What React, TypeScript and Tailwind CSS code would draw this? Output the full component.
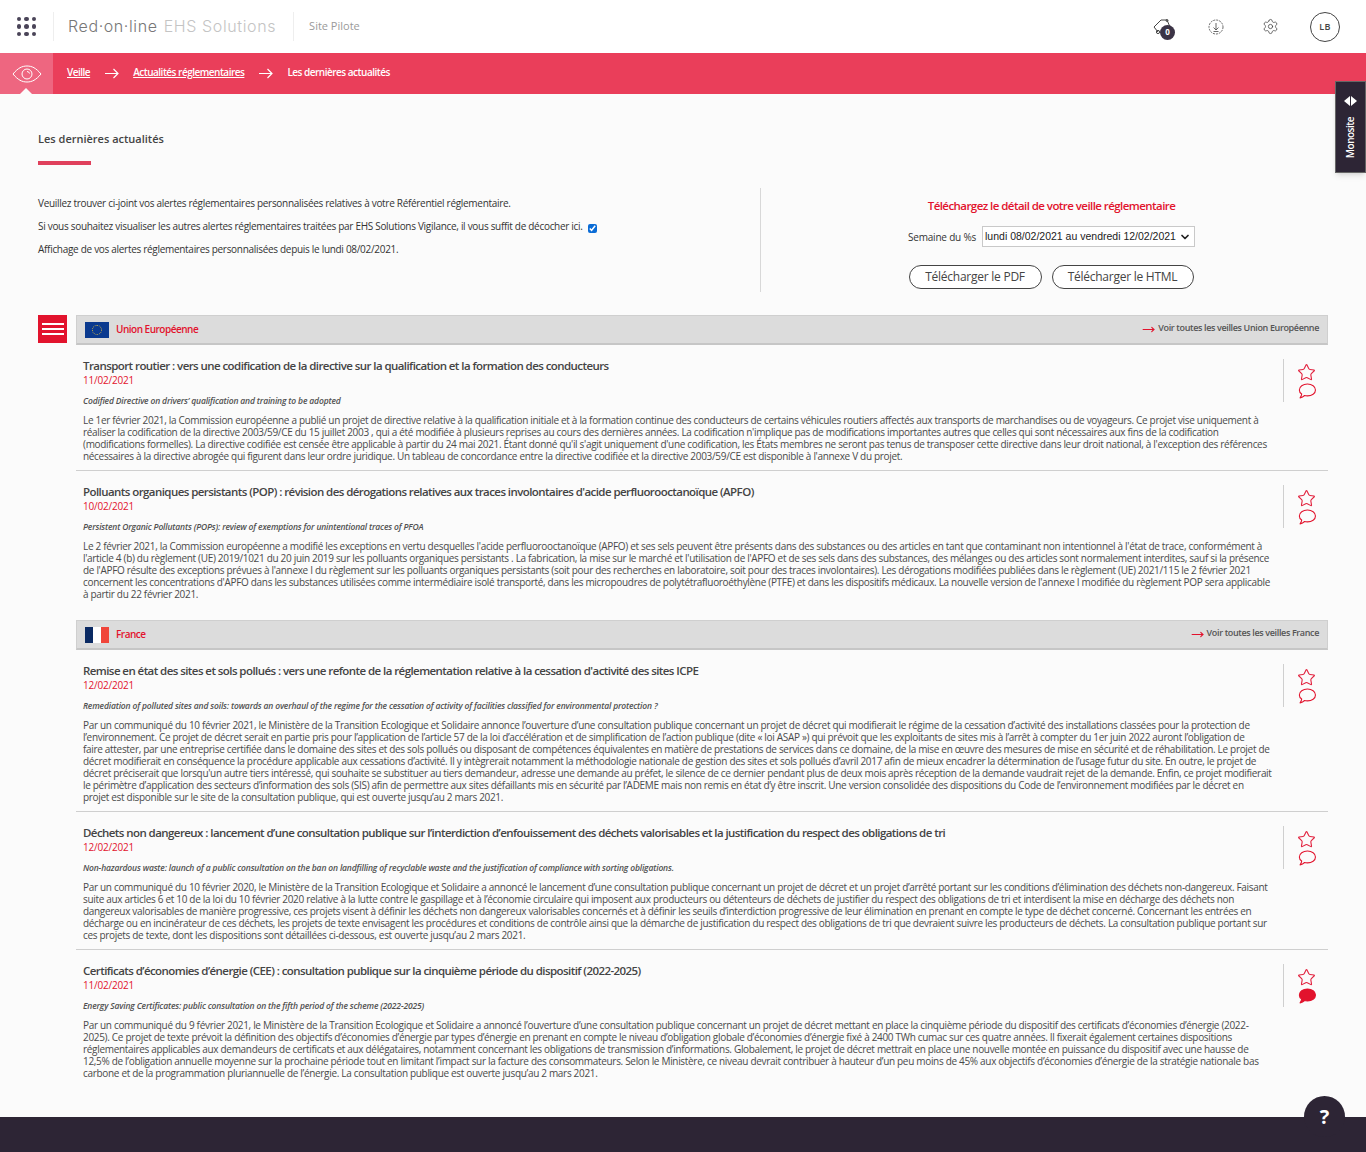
import React from "react";
import { MoveRight, Settings, Star, ChevronDown } from "lucide-react";

const font = "font-['Open_Sans','Noto_Sans',sans-serif]";

type Article = { title: string; date: string; en: string; lines: string[]; filled?: boolean };

const eu: Article[] = [
  {
    title: "Transport routier : vers une codification de la directive sur la qualification et la formation des conducteurs",
    date: "11/02/2021",
    en: "Codified Directive on drivers’ qualification and training to be adopted",
    lines: [
      "Le 1er février 2021, la Commission européenne a publié un projet de directive relative à la qualification initiale et à la formation continue des conducteurs de certains véhicules routiers affectés aux transports de marchandises ou de voyageurs. Ce projet vise uniquement à",
      "réaliser la codification de la directive 2003/59/CE du 15 juillet 2003 , qui a été modifiée à plusieurs reprises au cours des dernières années. La codification n'implique pas de modifications importantes autres que celles qui sont nécessaires aux fins de la codification",
      "(modifications formelles). La directive codifiée est censée être applicable à partir du 24 mai 2021. Étant donné qu'il s'agit uniquement d'une codification, les États membres ne seront pas tenus de transposer cette directive dans leur droit national, à l'exception des références",
      "nécessaires à la directive abrogée qui figurent dans leur ordre juridique. Un tableau de concordance entre la directive codifiée et la directive 2003/59/CE est disponible à l'annexe V du projet.",
    ],
  },
  {
    title: "Polluants organiques persistants (POP) : révision des dérogations relatives aux traces involontaires d'acide perfluorooctanoïque (APFO)",
    date: "10/02/2021",
    en: "Persistent Organic Pollutants (POPs): review of exemptions for unintentional traces of PFOA",
    lines: [
      "Le 2 février 2021, la Commission européenne a modifié les exceptions en vertu desquelles l'acide perfluorooctanoïque (APFO) et ses sels peuvent être présents dans des substances ou des articles en tant que contaminant non intentionnel à l'état de trace, conformément à",
      "l'article 4 (b) du règlement (UE) 2019/1021 du 20 juin 2019 sur les polluants organiques persistants . La fabrication, la mise sur le marché et l'utilisation de l'APFO et de ses sels dans des substances, des mélanges ou des articles sont normalement interdites, sauf si la présence",
      "de l'APFO résulte des exceptions prévues à l'annexe I du règlement sur les polluants organiques persistants (soit pour des recherches en laboratoire, soit pour des traces involontaires). Les dérogations modifiées publiées dans le règlement (UE) 2021/115 le 2 février 2021",
      "concernent les concentrations d'APFO dans les substances utilisées comme intermédiaire isolé transporté, dans les micropoudres de polytétrafluoroéthylène (PTFE) et dans les dispositifs médicaux. La nouvelle version de l'annexe I modifiée du règlement POP sera applicable",
      "à partir du 22 février 2021.",
    ],
  },
];

const fr: Article[] = [
  {
    title: "Remise en état des sites et sols pollués : vers une refonte de la réglementation relative à la cessation d'activité des sites ICPE",
    date: "12/02/2021",
    en: "Remediation of polluted sites and soils: towards an overhaul of the regime for the cessation of activity of facilities classified for environmental protection ?",
    lines: [
      "Par un communiqué du 10 février 2021, le Ministère de la Transition Ecologique et Solidaire annonce l’ouverture d’une consultation publique concernant un projet de décret qui modifierait le régime de la cessation d’activité des installations classées pour la protection de",
      "l’environnement. Ce projet de décret serait en partie pris pour l’application de l’article 57 de la loi d’accélération et de simplification de l’action publique (dite « loi ASAP ») qui prévoit que les exploitants de sites mis à l’arrêt à compter du 1er juin 2022 auront l’obligation de",
      "faire attester, par une entreprise certifiée dans le domaine des sites et des sols pollués ou disposant de compétences équivalentes en matière de prestations de services dans ce domaine, de la mise en œuvre des mesures de mise en sécurité et de réhabilitation. Le projet de",
      "décret modifierait en conséquence la procédure applicable aux cessations d’activité. Il y intègrerait notamment la méthodologie nationale de gestion des sites et sols pollués d’avril 2017 afin de mieux encadrer la détermination de l’usage futur du site. En outre, le projet de",
      "décret préciserait que lorsqu'un autre tiers intéressé, qui souhaite se substituer au tiers demandeur, adresse une demande au préfet, le silence de ce dernier pendant plus de deux mois après réception de la demande vaudrait rejet de la demande. Enfin, ce projet modifierait",
      "le périmètre d’application des secteurs d’information des sols (SIS) afin de permettre aux sites défaillants mis en sécurité par l’ADEME mais non remis en état d’y être inscrit. Une version consolidée des dispositions du Code de l’environnement modifiées par le décret en",
      "projet est disponible sur le site de la consultation publique, qui est ouverte jusqu’au 2 mars 2021.",
    ],
  },
  {
    title: "Déchets non dangereux : lancement d’une consultation publique sur l’interdiction d’enfouissement des déchets valorisables et la justification du respect des obligations de tri",
    date: "12/02/2021",
    en: "Non-hazardous waste: launch of a public consultation on the ban on landfilling of recyclable waste and the justification of compliance with sorting obligations.",
    lines: [
      "Par un communiqué du 10 février 2020, le Ministère de la Transition Ecologique et Solidaire a annoncé le lancement d’une consultation publique concernant un projet de décret et un projet d’arrêté portant sur les conditions d’élimination des déchets non-dangereux. Faisant",
      "suite aux articles 6 et 10 de la loi du 10 février 2020 relative à la lutte contre le gaspillage et à l’économie circulaire qui imposent aux producteurs ou détenteurs de déchets de justifier du respect des obligations de tri et interdisent la mise en décharge des déchets non",
      "dangereux valorisables de manière progressive, ces projets visent à définir les déchets non dangereux valorisables concernés et à définir les seuils d’interdiction progressive de leur élimination en prenant en compte le type de déchet concerné. Concernant les entrées en",
      "décharge ou en incinérateur de ces déchets, les projets de texte envisagent les procédures et conditions de contrôle ainsi que la démarche de justification du respect des obligations de tri que devraient suivre les producteurs de déchets. La consultation publique portant sur",
      "ces projets de texte, dont les dispositions sont détaillées ci-dessous, est ouverte jusqu’au 2 mars 2021.",
    ],
  },
  {
    title: "Certificats d’économies d’énergie (CEE) : consultation publique sur la cinquième période du dispositif (2022-2025)",
    date: "11/02/2021",
    en: "Energy Saving Certificates: public consultation on the fifth period of the scheme (2022-2025)",
    filled: true,
    lines: [
      "Par un communiqué du 9 février 2021, le Ministère de la Transition Ecologique et Solidaire a annoncé l’ouverture d’une consultation publique concernant un projet de décret mettant en place la cinquième période du dispositif des certificats d’économies d’énergie (2022-",
      "2025). Ce projet de texte prévoit la définition des objectifs d’économies d’énergie par types d’énergie en prenant en compte le niveau d’obligation globale d’économies d’énergie fixé à 2400 TWh cumac sur ces quatre années. Il fixerait également certaines dispositions",
      "réglementaires applicables aux demandeurs de certificats et aux délégataires, notamment concernant les obligations de transmission d’informations. Globalement, le projet de décret mettrait en place une nouvelle montée en puissance du dispositif avec une hausse de",
      "12,5% de l’obligation annuelle moyenne sur la prochaine période tout en limitant l’impact sur la facture des consommateurs. Selon le Ministère, ce niveau devrait contribuer à hauteur d’un peu moins de 45% aux objectifs d’économies d’énergie de la stratégie nationale bas",
      "carbone et de la programmation pluriannuelle de l’énergie. La consultation publique est ouverte jusqu’au 2 mars 2021.",
    ],
  },
];

function Bubble({ filled }: { filled?: boolean }) {
  return (
    <svg viewBox="0 0 20 16" preserveAspectRatio="none" className="w-[18px] h-[16px]" fill={filled ? "#e2132d" : "none"} stroke="#e2132d" strokeWidth="1.2" strokeLinejoin="round">
      <path d="M10.5 1C5.5 1 1.5 3.4 1.5 6.9c0 1.7 1 3.2 2.6 4.2-.2 1.3-.8 2.6-1.8 3.7 1.9-.3 3.7-1.1 5-2.3 1 .3 2 .4 3.2.4 5 0 8.9-2.5 8.9-6S15.5 1 10.5 1Z" />
    </svg>
  );
}

function CrumbArrow() {
  return (
    <svg viewBox="0 0 14 11" className="w-[14px] h-[11px] ml-[15px] mr-[14px] mt-[1px]" fill="none" stroke="white" strokeWidth="1.2">
      <path d="M0 5.5h13M8.5 1l4.5 4.5L8.5 10" />
    </svg>
  );
}

function ArticleRow({ a, last }: { a: Article; last?: boolean }) {
  return (
    <div className={`flex pl-[7px] pt-[14px] pb-[8px] ${last ? "" : "border-b border-[#cfcfcf]"}`}>
      <div className="w-[1200px] min-w-0">
        <div className="h-[14px] whitespace-nowrap text-[11.5px] leading-[14px] font-semibold text-[#444444] tracking-[-0.57px]">{a.title}</div>
        <div className="h-[14px] text-[10px] leading-[14px] text-[#e2132d] tracking-[-0.2px]">{a.date}</div>
        <div className="mt-[1px] h-[26px] whitespace-nowrap text-[8.5px] leading-[26px] italic font-semibold text-[#505050] tracking-[-0.16px]">{a.en}</div>
        <div className="text-[10px] leading-[12px] text-[#4a4a4a] tracking-[-0.315px]">
          {a.lines.map((l, i) => (
            <div key={i} className="whitespace-nowrap">{l}</div>
          ))}
        </div>
      </div>
      <div className="w-[1px] h-[43px] bg-[#cfcfcf] shrink-0" />
      <div className="ml-[13px] pt-[4px] flex flex-col items-center -space-y-[1px]">
        <Star size={19} strokeWidth={1.4} className="text-[#e2233f]" />
        <div className="pt-[2px]">
          <Bubble filled={a.filled} />
        </div>
      </div>
    </div>
  );
}

function SectionBar({ flag, name, link }: { flag: React.ReactNode; name: string; link: string }) {
  return (
    <div className="h-[30px] flex items-center bg-[#dcdcdc] border border-[#cfcfcf] border-b-2 border-b-[#c6c6c6] pl-[8px] pr-[8px]">
      {flag}
      <span className="ml-[7px] text-[10px] font-semibold text-[#e2132d] tracking-[-0.5px]">{name}</span>
      <span className="ml-auto -mt-[4px] flex items-center gap-[3px] text-[9px] font-semibold text-[#555555] tracking-[-0.36px]">
        <MoveRight size={13} strokeWidth={2} className="text-[#e2132d] mt-[4px]" />
        {link}
      </span>
    </div>
  );
}

export default function App() {
  return (
    <div className={`${font} w-[1366px] h-[1152px] relative overflow-hidden bg-[#fbfbfb] text-[#444444]`}>
      <header className="h-[53px] bg-white flex items-center">
        <div className="w-[53px] flex justify-center">
          <div className="grid grid-cols-3 gap-[3px]">
            {Array.from({ length: 9 }).map((_, i) => (
              <span key={i} className="w-[4.5px] h-[4.5px] rounded-full bg-[#4a4458]" />
            ))}
          </div>
        </div>
        <div className="h-[29px] w-px bg-[#eeeeee]" />
        <div className="ml-[14px] -mt-[1px] whitespace-nowrap font-['Inter',sans-serif] text-[16px] font-light tracking-[0.6px] text-[#777777]">
          Red·on·line <span className="ml-[1px] text-[#c4c4c4] tracking-[0.62px]">EHS Solutions</span>
        </div>
        <div className="ml-[17px] h-[29px] w-px bg-[#eeeeee]" />
        <div className="ml-[15px] text-[11px] text-[#9a9a9a]">Site Pilote</div>
        <div className="ml-auto flex items-center pr-[26px]">
          <div className="relative w-[24px] h-[24px] mr-[32px]">
            <svg viewBox="0 0 22 22" className="w-[22px] h-[22px] mt-[3px]" fill="none" stroke="#444" strokeWidth="1">
              <path d="M2 9 L9 2 L15 2 L18 9" />
              <path d="M2 9 L6 14" />
              <circle cx="6" cy="14" r="1.6" />
              <circle cx="15" cy="2.5" r="1" />
            </svg>
            <span className="absolute left-[8px] top-[10px] w-[15px] h-[15px] rounded-full bg-[#3b3446] text-white text-[8px] font-bold flex items-center justify-center">0</span>
          </div>
          <svg viewBox="0 0 16 16" className="w-[16px] h-[16px] mr-[38px]" fill="none" stroke="#444" strokeWidth="0.8">
            <circle cx="8" cy="8" r="7" strokeDasharray="2 1" />
            <path d="M8 4v7M5.5 8.5 8 11l2.5-2.5M5.5 12.5h5" />
          </svg>
          <Settings size={17} strokeWidth={1.1} className="text-[#444444] mr-[31px]" />
          <div className="w-[30px] h-[30px] rounded-full border border-[#444444] bg-white flex items-center justify-center text-[9px] font-semibold tracking-[0.4px] text-[#444444]">LB</div>
        </div>
      </header>

      <nav className="h-[41px] bg-[#ea3e5a] flex items-center text-white relative">
        <div className="w-[53px] h-full bg-[#ee6680] flex items-center justify-center relative">
          <svg viewBox="0 0 30 18" className="w-[30px] h-[18px]" fill="none" stroke="white" strokeWidth="1">
            <path d="M1 9C6 3 10 1 15 1s9 2 14 8c-5 6-9 8-14 8S6 15 1 9Z" />
            <circle cx="15" cy="9" r="5" />
            <path d="M15 6.5a2.5 2.5 0 0 1 2.5 2" />
          </svg>
          <span className="absolute bottom-0 left-[20px] w-0 h-0 border-l-[6px] border-r-[6px] border-b-[6px] border-l-transparent border-r-transparent border-b-[#fbfbfb]" />
        </div>
        <div className="ml-[14px] -mt-[2px] flex items-center text-[10px] font-semibold tracking-[-0.5px] whitespace-nowrap">
          <span className="underline">Veille</span>
          <CrumbArrow />
          <span className="underline">Actualités réglementaires</span>
          <CrumbArrow />
          <span>Les dernières actualités</span>
        </div>
      </nav>

      <aside className="absolute right-0 top-[81px] w-[31px] h-[92px] bg-[#2d2535] border border-[#666666] shadow-md flex flex-col items-center text-white">
        <div className="mt-[14px] flex gap-[1px]">
          <span className="w-0 h-0 border-y-[5px] border-y-transparent border-r-[6px] border-r-white" />
          <span className="w-0 h-0 border-y-[5px] border-y-transparent border-l-[6px] border-l-white" />
        </div>
        <span className="mt-[11px] [writing-mode:vertical-rl] rotate-180 text-[10px] font-semibold tracking-[-0.5px]">Monosite</span>
      </aside>

      <main className="px-[38px]">
        <h1 className="pt-[37px] h-[67px] text-[11px] leading-[16px] font-semibold text-[#444444]">Les dernières actualités</h1>
        <div className="w-[53px] h-[4px] bg-[#e0405c]" />

        <section className="mt-[23px] flex h-[104px]">
          <div className="w-[723px] border-r border-[#d8d8d8] text-[10px] tracking-[-0.3px] text-[#333333] pt-[9px] space-y-[11px]">
            <p className="leading-[12px]">Veuillez trouver ci-joint vos alertes réglementaires personnalisées relatives à votre Référentiel réglementaire.</p>
            <p className="leading-[12px] h-[12px] flex items-center">
              Si vous souhaitez visualiser les autres alertes réglementaires traitées par EHS Solutions Vigilance, il vous suffit de décocher ici.
              <input type="checkbox" defaultChecked className="ml-[5px] translate-y-[2px] w-[9px] h-[9px] accent-[#0b6cd6]" />
            </p>
            <p className="leading-[12px]">Affichage de vos alertes réglementaires personnalisées depuis le lundi 08/02/2021.</p>
          </div>
          <div className="flex-1 flex flex-col items-center pl-[14px]">
            <div className="pt-[10px] text-[11.5px] leading-[16px] font-semibold text-[#e2132d] tracking-[-0.56px]">Téléchargez le détail de votre veille réglementaire</div>
            <div className="mt-[12px] flex items-center gap-[6px]">
              <span className="text-[10px] tracking-[-0.2px] text-[#333333] mt-[1px]">Semaine du %s</span>
              <div className="h-[21px] w-[213px] border border-[#c9c9c9] bg-white flex items-center pl-[2px] pr-[3px] font-['Liberation_Sans',sans-serif] text-[10.5px] text-[#222222] whitespace-nowrap">
                lundi 08/02/2021 au vendredi 12/02/2021
                <ChevronDown size={12} strokeWidth={3.5} className="ml-auto" />
              </div>
            </div>
            <div className="mt-[18px] flex gap-[10px] -ml-[1px]">
              <span className="h-[24px] w-[133px] rounded-full border border-[#444444] bg-white flex items-center justify-center text-[12px] text-[#444444] tracking-[-0.25px]">Télécharger le PDF</span>
              <span className="h-[24px] w-[142px] rounded-full border border-[#444444] bg-white flex items-center justify-center text-[12px] text-[#444444] tracking-[-0.25px]">Télécharger le HTML</span>
            </div>
          </div>
        </section>

        <section className="mt-[23px] flex">
          <div className="w-[29px] h-[28px] bg-[#e2132d] flex flex-col items-center justify-center gap-[2.5px] shrink-0">
            <span className="w-[22px] h-[2.5px] bg-white" />
            <span className="w-[22px] h-[2.5px] bg-white" />
            <span className="w-[22px] h-[2.5px] bg-white" />
          </div>
          <div className="ml-[9px] w-[1252px]">
            <SectionBar
              flag={
                <span className="w-[24px] h-[16px] bg-[#0b3a8f] shrink-0 flex items-center justify-center">
                  <span className="w-[10px] h-[10px] rounded-full border border-dotted border-[#c9b14a]" />
                </span>
              }
              name="Union Européenne"
              link="Voir toutes les veilles Union Européenne"
            />
            {eu.map((a, i) => (
              <ArticleRow key={a.date} a={a} last={i === eu.length - 1} />
            ))}
            <div className="mt-[12px]">
              <SectionBar
                flag={
                  <span className="w-[24px] h-[16px] shrink-0 flex">
                    <span className="w-[8px] bg-[#0b2a63]" />
                    <span className="w-[8px] bg-white" />
                    <span className="w-[8px] bg-[#f0453a]" />
                  </span>
                }
                name="France"
                link="Voir toutes les veilles France"
              />
            </div>
            {fr.map((a, i) => (
              <ArticleRow key={a.title} a={a} last={i === fr.length - 1} />
            ))}
          </div>
        </section>
      </main>

      <footer className="absolute left-0 right-0 bottom-0 h-[35px] bg-[#2d2535]" />
      <div className="absolute left-[1304px] top-[1096px] w-[41px] h-[41px] rounded-full bg-[#2d2535] flex items-center justify-center text-white text-[20px] font-bold">?</div>
    </div>
  );
}
